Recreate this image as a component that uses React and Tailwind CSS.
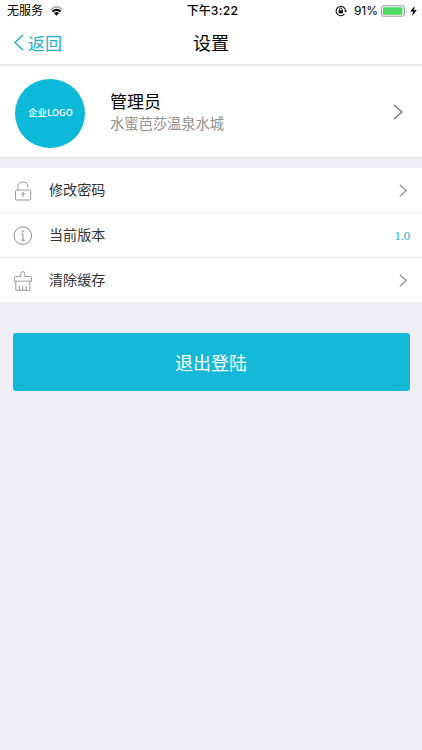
import React from 'react';

const CJK = "font-['Noto_Sans_CJK_SC',sans-serif]";

function Chevron({ className }) {
  return (
    <svg className={className} viewBox="0 0 10 16" fill="none" stroke="currentColor" preserveAspectRatio="none">
      <path d="M1 1L9 8L1 15" strokeWidth="1.4" vectorEffect="non-scaling-stroke" />
    </svg>
  );
}

function LockIcon() {
  return (
    <svg className="h-5 w-5" viewBox="0 0 20 20" fill="none" stroke="#999" strokeWidth="1">
      <rect x="2.5" y="9" width="15.2" height="10" rx="1.2" />
      <path d="M4.9 9V6A5 5 0 0 1 14.8 5V6.6" />
      <circle cx="10" cy="12.7" r="1.1" />
      <path d="M10 13.8v2.4" />
    </svg>
  );
}

function InfoIcon() {
  return (
    <svg className="h-5 w-5" viewBox="0 0 20 20" fill="none" stroke="#8e8e8e" strokeWidth="1">
      <circle cx="9.8" cy="9.6" r="8.8" />
      <path d="M8.3 8H10v6.2" />
      <path d="M8.2 14.2h3.6" />
      <circle cx="9.9" cy="5.3" r=".9" fill="#8e8e8e" stroke="none" />
    </svg>
  );
}

function BrushIcon() {
  return (
    <svg className="h-5 w-5" viewBox="0 0 20 20" fill="none" stroke="#999" strokeWidth="1" strokeLinejoin="round">
      <path d="M7.8 5.5V2.5Q7.8 .7 9.8 .7T11.8 2.5V5.5H17.4Q18.5 5.5 18.5 6.5V10.2H1.3V6.5Q1.3 5.5 2.4 5.5Z" />
      <path d="M2.8 10.2V19.3H16.8V10.2M6.5 19V15M9.8 19V15M13.2 19V15" />
    </svg>
  );
}

function Row({ icon, label, children }) {
  return (
    <div className="flex h-[45px] items-center border-b border-[#e8e8ea] bg-white pl-[13px] pr-3 last:h-11 last:border-b-0">
      <div className="pt-[2px]">{icon}</div>
      <span className="ml-4 flex-1 pb-[2px] text-[14.1px] leading-5 text-[#333]">{label}</span>
      {children}
    </div>
  );
}

export default function App() {
  return (
    <div className={`h-[750px] w-full overflow-hidden bg-[#efeef4] text-black ${CJK}`}>
      <header className="h-[66px] border-b-2 border-[#e8e8e8] bg-white">
        <div className="grid h-[21px] grid-cols-3 items-center text-[12px] leading-[19px]">
          <div className="flex items-center pl-[7px]">
            <span className="pb-[2px]">无服务</span>
            <svg className="ml-[7px] h-[10px] w-[13px]" viewBox="0 0 13 10" fill="none">
              <path d="M.7 3.5Q6.5-1.8 12.3 3.5" stroke="#aaa" strokeWidth="1.6" />
              <path d="M2.4 5.6Q6.5 1.8 10.6 5.6" stroke="#000" strokeWidth="2" />
              <path d="M4 7.3Q6.5 4.9 9 7.3L6.5 9.8Z" fill="#000" />
            </svg>
          </div>
          <div className="pb-px pl-[3px] text-center font-medium whitespace-nowrap">
            下午<span className="font-['Inter','Noto_Sans_CJK_SC',sans-serif] text-[12.2px] tracking-[0.3px]">3:22</span>
          </div>
          <div className="flex items-center justify-end pr-[5px]">
            <svg className="mr-[7px] h-[12px] w-[12px]" viewBox="0 0 12 12" fill="none" stroke="#111">
              <path d="M9.4 9.1A4.7 4.7 0 1 1 10.5 5.5" strokeWidth="1.1" />
              <path d="M8.9 5.4h3.1l-1.5 2z" fill="#111" stroke="none" />
              <rect x="3.6" y="5.2" width="4.4" height="3.2" fill="#111" stroke="none" />
              <path d="M4.5 5.4V4.3a1.3 1.3 0 0 1 2.6 0v1.1" strokeWidth=".9" />
            </svg>
            <span className="font-['Inter',sans-serif] text-[12px]">91%</span>
            <svg className="ml-[3px] h-[12px] w-[27px]" viewBox="0 0 27 12">
              <rect x=".5" y=".8" width="23" height="10.4" rx="2" fill="#fff" stroke="#999" />
              <rect x="2" y="2.3" width="19.5" height="7.4" rx=".5" fill="#4cd964" />
              <path d="M25 4q1.4 2 0 4z" fill="#999" />
            </svg>
            <svg className="ml-[2px] h-[10px] w-[7px]" viewBox="0 0 7 10">
              <path d="M4.6 0L.3 5.5H3L2.2 10L6.8 4.1H4z" />
            </svg>
          </div>
        </div>
        <div className="grid h-[43px] grid-cols-3 items-center">
          <div className="flex items-center pl-[14px] text-[17px] text-[#22b1cd]">
            <Chevron className="h-[17px] w-[10px] rotate-180" />
            <span className="ml-1 leading-6">返回</span>
          </div>
          <h1 className="pb-[2px] text-center text-[18px] leading-6 font-normal">设置</h1>
        </div>
      </header>

      <section className="flex h-[92px] items-center border-b border-[#e3e2e7] bg-white pr-[19px] pl-[15px]">
        <div className="mt-[3px] flex h-[69px] w-[70px] items-center justify-center rounded-full bg-[#0cb9d8] pl-px text-[9.3px] font-medium tracking-[0.1px] text-white">
          企业LOGO
        </div>
        <div className="ml-[25px] flex-1">
          <div className="text-[17px] leading-[22px]">管理员</div>
          <div className="text-[14.25px] leading-[21px] text-[#919191]">水蜜芭莎温泉水城</div>
        </div>
        <Chevron className="h-[16px] w-[10px] text-[#777]" />
      </section>

      <section className="mt-[10px]">
        <Row icon={<LockIcon />} label="修改密码">
          <Chevron className="mr-[3px] h-[13px] w-[8px] text-[#999]" />
        </Row>
        <Row icon={<InfoIcon />} label="当前版本">
          <span className="pt-[2px] font-['Liberation_Serif',serif] text-[12.5px] text-[#22b1cd]">1.0</span>
        </Row>
        <Row icon={<BrushIcon />} label="清除缓存">
          <Chevron className="mr-[3px] h-[13px] w-[8px] text-[#999]" />
        </Row>
      </section>

      <button className="mx-auto mt-[31px] flex h-[58px] w-[397px] items-center justify-center rounded-[3px] bg-[#15b8d7] text-[18px] font-normal text-white">
        退出登陆
      </button>
    </div>
  );
}
